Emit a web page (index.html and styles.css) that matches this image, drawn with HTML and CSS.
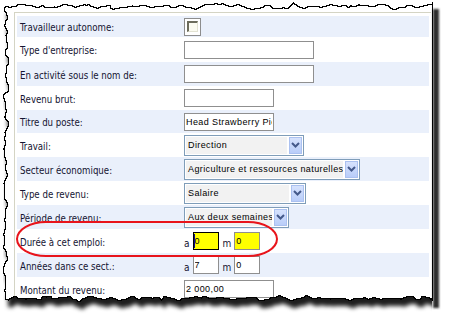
FILE: index.html
```html
<!DOCTYPE html>
<html lang="fr">
<head>
<meta charset="utf-8">
<title>Formulaire emploi</title>
<link rel="stylesheet" href="styles.css">
</head>
<body>
<div class="shot">
  <div class="frame">
    <div class="row first alt">
      <div class="label">Travailleur autonome:</div>
      <div class="field"><span class="check"><span class="check-inner"></span></span></div>
    </div>
    <div class="row tall">
      <div class="label">Type d'entreprise:</div>
      <div class="field"><input class="txt w130" type="text" value=""></div>
    </div>
    <div class="row alt">
      <div class="label">En activité sous le nom de:</div>
      <div class="field"><input class="txt w130" type="text" value=""></div>
    </div>
    <div class="row">
      <div class="label">Revenu brut:</div>
      <div class="field"><input class="txt w90" type="text" value=""></div>
    </div>
    <div class="row alt short">
      <div class="label">Titre du poste:</div>
      <div class="field"><input class="txt w90" type="text" value="Head Strawberry Picker"></div>
    </div>
    <div class="row">
      <div class="label">Travail:</div>
      <div class="field">
        <div class="sel s120"><span class="sel-text">Direction</span><span class="sel-btn"><svg width="9" height="6" viewBox="0 0 9 6"><path d="M1 1 L4.5 4.5 L8 1" fill="none" stroke="#44598a" stroke-width="2"/></svg></span></div>
      </div>
    </div>
    <div class="row alt">
      <div class="label">Secteur économique:</div>
      <div class="field">
        <div class="sel s176"><span class="sel-text">Agriculture et ressources naturelles</span><span class="sel-btn"><svg width="9" height="6" viewBox="0 0 9 6"><path d="M1 1 L4.5 4.5 L8 1" fill="none" stroke="#44598a" stroke-width="2"/></svg></span></div>
      </div>
    </div>
    <div class="row">
      <div class="label">Type de revenu:</div>
      <div class="field">
        <div class="sel s122"><span class="sel-text">Salaire</span><span class="sel-btn"><svg width="9" height="6" viewBox="0 0 9 6"><path d="M1 1 L4.5 4.5 L8 1" fill="none" stroke="#44598a" stroke-width="2"/></svg></span></div>
      </div>
    </div>
    <div class="row alt">
      <div class="label">Période de revenu:</div>
      <div class="field">
        <div class="sel s105"><span class="sel-text">Aux deux semaines</span><span class="sel-btn"><svg width="9" height="6" viewBox="0 0 9 6"><path d="M1 1 L4.5 4.5 L8 1" fill="none" stroke="#44598a" stroke-width="2"/></svg></span></div>
      </div>
    </div>
    <div class="row">
      <div class="label">Durée à cet emploi:</div>
      <div class="field">
        <span class="unit">a</span>
        <span class="caretbox"><input class="txt w26 yellow focus" type="text" value="0"></span>
        <span class="unit m">m</span>
        <input class="txt w26 yellow" type="text" value="0">
      </div>
    </div>
    <div class="row alt">
      <div class="label">Années dans ce sect.:</div>
      <div class="field">
        <span class="unit">a</span>
        <input class="txt w26" type="text" value="7">
        <span class="unit m">m</span>
        <input class="txt w26" type="text" value="0">
      </div>
    </div>
    <div class="row">
      <div class="label">Montant du revenu:</div>
      <div class="field"><input class="txt w90" type="text" value="2 000,00"></div>
    </div>
  </div>

  <div class="ring"></div>

  <svg class="tear" width="449" height="322" viewBox="0 0 449 322" aria-hidden="true">
    <defs>
      <filter id="torn" filterUnits="userSpaceOnUse" x="0" y="0" width="449" height="322" color-interpolation-filters="sRGB">
        <feTurbulence type="fractalNoise" baseFrequency="0.07" numOctaves="3" seed="4" result="noise"/>
        <feDisplacementMap in="SourceGraphic" in2="noise" scale="10" xChannelSelector="R" yChannelSelector="G" result="paper"/>
        <feFlood flood-color="#ffffff" result="white"/>
        <feComposite in="white" in2="paper" operator="out" result="outside"/>
        <feGaussianBlur in="paper" stdDeviation="2" result="blur"/>
        <feOffset in="blur" dx="3" dy="7" result="off"/>
        <feFlood flood-color="#1e1e1e" result="grey"/>
        <feComposite in="grey" in2="off" operator="in" result="sh"/>
        <feComposite in="sh" in2="paper" operator="out" result="shadow"/>
        <feMorphology in="paper" operator="erode" radius="1" result="inner"/>
        <feFlood flood-color="#000000" result="black"/>
        <feComposite in="black" in2="paper" operator="in" result="b1"/>
        <feComposite in="b1" in2="inner" operator="out" result="edge"/>
        <feMerge>
          <feMergeNode in="outside"/>
          <feMergeNode in="shadow"/>
          <feMergeNode in="edge"/>
        </feMerge>
      </filter>
      <filter id="soft" x="-50%" y="-5%" width="200%" height="110%">
        <feGaussianBlur stdDeviation="1.3"/>
      </filter>
      <clipPath id="leftpart"><rect x="0" y="0" width="432" height="322"/></clipPath>
    </defs>
    <g clip-path="url(#leftpart)">
      <rect x="5" y="6" width="480" height="293" fill="#000" filter="url(#torn)"/>
    </g>
    <rect x="432" y="0" width="17" height="322" fill="#fff"/>
    <rect x="433" y="9" width="6" height="299" fill="#2e2e2e" filter="url(#soft)"/>
    <line x1="432.5" y1="2" x2="432.5" y2="301" stroke="#000" stroke-width="1"/>
  </svg>
</div>
</body>
</html>
```

FILE: styles.css
```css
body {
  margin: 0;
  background: #fff;
}

.shot {
  position: relative;
  width: 449px;
  height: 322px;
  overflow: hidden;
  background: #fff;
  font-family: "DejaVu Sans Condensed", "DejaVu Sans", sans-serif;
}

.frame {
  margin: 12px 0 0 14px;
  width: 412px;
  padding: 3px 2px 20px 2px;
  border-top: 1px solid #d4d4c4;
  border-left: 1px solid #d4d4c4;
}

.row {
  display: flex;
  align-items: center;
  height: 24px;
}

.row.first { height: 21px; }
.row.tall { height: 25px; }
.row.short { height: 23px; }

.row.alt { background: #eaf0fb; }

.label {
  flex: none;
  width: 164px;
  padding-left: 3px;
  padding-top: 2px;
  font-size: 9.6px;
  color: #141432;
  white-space: nowrap;
}

.field {
  display: flex;
  align-items: center;
}

.txt {
  box-sizing: border-box;
  height: 18px;
  margin: 0;
  padding: 0 1px;
  border: 1px solid #8f8f8f;
  background: #fff;
  color: #000;
  font-family: "Liberation Sans", sans-serif;
  font-size: 9px;
  letter-spacing: 0.4px;
  outline: none;
}

.w130 { width: 130px; }
.w90 { width: 90px; }
.w26 { width: 26px; }

.yellow { background: #ffff00; }
.focus { border-color: #000; }

.caretbox {
  position: relative;
  display: flex;
}

.caretbox::before {
  content: "";
  position: absolute;
  left: 1px;
  top: 2px;
  width: 1px;
  height: 14px;
  background: #0c0c90;
}

.unit {
  font-size: 10px;
  color: #141432;
  margin: 4px 3px 0 0;
}

.unit.m { margin-left: 4px; }

.check {
  box-sizing: border-box;
  display: block;
  width: 17px;
  height: 18px;
  padding: 2px;
  border: 1px solid #8d8d8d;
  background: #fff;
}

.check-inner {
  box-sizing: border-box;
  display: block;
  width: 11px;
  height: 11px;
  border-top: 2px solid #6c6c5c;
  border-left: 2px solid #6c6c5c;
  border-right: 1px solid #e2e2d2;
  border-bottom: 1px solid #e2e2d2;
  background: #fbfbf1;
}

.sel {
  box-sizing: border-box;
  display: flex;
  height: 21px;
  padding: 1px;
  border: 1px solid #7f9db9;
  background: #fff;
}

.s120 { width: 120px; }
.s176 { width: 176px; }
.s122 { width: 122px; }
.s105 { width: 105px; }

.sel-text {
  flex: 1;
  min-width: 0;
  display: flex;
  align-items: center;
  margin-right: 2px;
  padding-left: 2px;
  overflow: hidden;
  white-space: nowrap;
  background: #f2f2f2;
  color: #000;
  font-family: "Liberation Sans", sans-serif;
  font-size: 9px;
  letter-spacing: 0.4px;
}

.sel-btn {
  box-sizing: border-box;
  flex: none;
  width: 13px;
  display: flex;
  align-items: center;
  justify-content: center;
  border: 1px solid #abc1f0;
  background: linear-gradient(#d6e2fd, #b9cdf9);
}

.ring {
  position: absolute;
  left: 16px;
  top: 221px;
  width: 262px;
  height: 36px;
  box-sizing: border-box;
  border: 2px solid #e8141b;
  border-radius: 30px / 18px;
}

.tear {
  position: absolute;
  left: 0;
  top: 0;
  pointer-events: none;
}
```
